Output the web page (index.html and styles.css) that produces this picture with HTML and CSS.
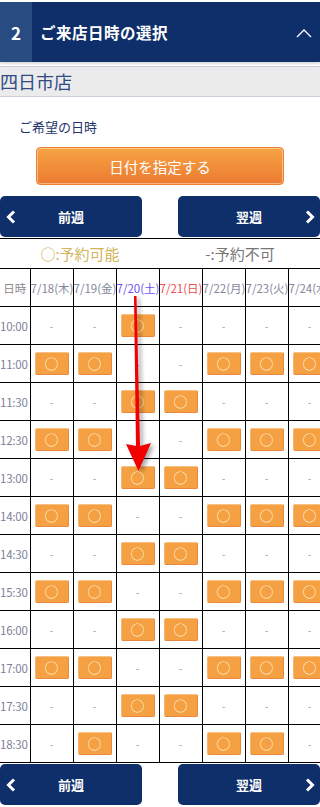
FILE: index.html
```html
<!DOCTYPE html>
<html lang="ja">
<head>
    <meta charset="UTF-8">
    <meta name="viewport" content="width=device-width, initial-scale=1.0">
    <title>ご来店日時の選択</title>
    <link rel="stylesheet" href="styles.css">
</head>
<body>
    <div class="page">
        <!-- Step header -->
        <div class="step-head">
            <div class="step-num">2</div>
            <div class="step-title">ご来店日時の選択</div>
            <svg class="step-toggle" width="16" height="9" viewBox="0 0 16 9">
                <polyline points="1,8 8,1 15,8" fill="none" stroke="#fff" stroke-width="1.3"/>
            </svg>
        </div>

        <div class="store-bar">四日市店</div>

        <div class="wish-label">ご希望の日時</div>
        <button class="date-btn">日付を指定する</button>

        <div class="week-nav">
            <button class="week-btn prev">
                <svg width="10" height="14" viewBox="0 0 10 14"><polyline points="8,1.5 2.5,7 8,12.5" fill="none" stroke="#fff" stroke-width="3"/></svg>
                <span>前週</span>
            </button>
            <button class="week-btn next">
                <span>翌週</span>
                <svg width="10" height="14" viewBox="0 0 10 14"><polyline points="2,1.5 7.5,7 2,12.5" fill="none" stroke="#fff" stroke-width="3"/></svg>
            </button>
        </div>

        <div class="legend">
            <span class="ok">○:予約可能</span>
            <span class="ng">-:予約不可</span>
        </div>

        <div class="sched-wrap">
            <table class="sched" id="sched">
                <colgroup>
                    <col class="c-time">
                    <col class="c-day"><col class="c-day"><col class="c-day"><col class="c-day">
                    <col class="c-day"><col class="c-day"><col class="c-day">
                </colgroup>
                <thead>
                    <tr>
                        <th class="time">日時</th>
                        <th>7/18(木)</th>
                        <th>7/19(金)</th>
                        <th class="sat">7/20(土)</th>
                        <th class="sun">7/21(日)</th>
                        <th>7/22(月)</th>
                        <th>7/23(火)</th>
                        <th>7/24(水)</th>
                    </tr>
                </thead>
                <tbody></tbody>
            </table>
        </div>

        <div class="week-nav bottom">
            <button class="week-btn prev">
                <svg width="10" height="14" viewBox="0 0 10 14"><polyline points="8,1.5 2.5,7 8,12.5" fill="none" stroke="#fff" stroke-width="3"/></svg>
                <span>前週</span>
            </button>
            <button class="week-btn next">
                <span>翌週</span>
                <svg width="10" height="14" viewBox="0 0 10 14"><polyline points="2,1.5 7.5,7 2,12.5" fill="none" stroke="#fff" stroke-width="3"/></svg>
            </button>
        </div>

        <!-- red guide arrow drawn over the table -->
        <svg class="guide-arrow" width="320" height="807" viewBox="0 0 320 807">
            <defs>
                <filter id="sh" x="-50%" y="-10%" width="200%" height="120%">
                    <feGaussianBlur stdDeviation="2"/>
                </filter>
            </defs>
            <polygon points="134,296 136.5,296 140,446 151,443 138.5,471 126,444 136,446" fill="#000" opacity="0.35" filter="url(#sh)" transform="translate(3,2)"/>
            <polygon points="134,296 136.5,296 140,446 151,443 138.5,471 126,444 136,446" fill="#f20000"/>
        </svg>
    </div>

    <script>
        // o = 予約可能, - = 予約不可
        var slots = [
            ['10:00', '--o----'],
            ['11:00', 'oo--ooo'],
            ['11:30', '--oo---'],
            ['12:30', 'oo--ooo'],
            ['13:00', '--oo---'],
            ['14:00', 'oo--ooo'],
            ['14:30', '--oo---'],
            ['15:30', 'oo--ooo'],
            ['16:00', '--oo---'],
            ['17:00', 'oo--ooo'],
            ['17:30', '--oo---'],
            ['18:30', '-o--oo-']
        ];

        var body = document.querySelector('#sched tbody');
        slots.forEach(function (row) {
            var tr = document.createElement('tr');
            var html = '<td class="time">' + row[0] + '</td>';
            for (var i = 0; i < row[1].length; i++) {
                if (row[1][i] === 'o') {
                    html += '<td><button class="slot">○</button></td>';
                } else {
                    html += '<td class="none">-</td>';
                }
            }
            tr.innerHTML = html;
            body.appendChild(tr);
        });
    </script>
</body>
</html>
```

FILE: styles.css
```css
body {
    margin: 0;
    font-family: "Noto Sans CJK JP", "Noto Sans", sans-serif;
    background-color: #fff;
    color: #333;
}
.page {
    position: relative;
    width: 320px;
    height: 807px;
    overflow: hidden;
    padding-top: 2px;
    box-sizing: border-box;
}
.step-head {
    display: flex;
    align-items: center;
    height: 60px;
    background-color: #0f2f6b;
    color: #fff;
    box-shadow: 0 2px 2px rgba(0, 0, 0, 0.15);
}
.step-num {
    width: 32px;
    height: 100%;
    display: flex;
    align-items: center;
    justify-content: center;
    background-color: #284b82;
    font-size: 17px;
    font-weight: bold;
}
.step-title {
    flex: 1;
    padding-left: 8px;
    font-size: 15.5px;
    font-weight: bold;
    letter-spacing: 0.5px;
}
.step-toggle {
    margin-right: 8px;
    margin-top: 2px;
}
.store-bar {
    margin-top: 4px;
    height: 29px;
    line-height: 29px;
    background-color: #ebebeb;
    border-top: 1px solid #c9ced8;
    border-bottom: 1px solid #c9ced8;
    font-size: 18px;
    color: #2f4c86;
}
.wish-label {
    margin-top: 20px;
    padding-left: 19px;
    height: 20px;
    line-height: 20px;
    font-size: 13px;
    color: #24346a;
}
.date-btn {
    display: block;
    width: 248px;
    height: 38px;
    margin: 10px auto 0;
    padding: 0;
    border: 1px solid #f07f33;
    border-radius: 4px;
    background: linear-gradient(#f6a444, #ec7a31);
    box-shadow: inset 0 0 0 1px rgba(255, 230, 190, 0.55);
    color: #fff;
    font-family: inherit;
    font-size: 14.5px;
}
.week-nav {
    display: flex;
    justify-content: space-between;
    margin-top: 11px;
}
.week-nav.bottom {
    margin-top: 1px;
}
.week-btn {
    position: relative;
    display: flex;
    align-items: center;
    justify-content: center;
    width: 142px;
    height: 41px;
    padding: 0;
    border: none;
    border-radius: 5px;
    background-color: #0f2f6b;
    color: #fff;
    font-family: inherit;
    font-size: 13px;
    font-weight: bold;
}
.week-btn svg {
    position: absolute;
    top: 14px;
}
.week-btn.prev svg {
    left: 6px;
}
.week-btn.next svg {
    right: 5px;
}
.legend {
    display: flex;
    margin-top: 1px;
    height: 29px;
    border-top: 1px solid #000;
    font-size: 15px;
    line-height: 29px;
}
.legend span {
    flex: 1;
    text-align: center;
}
.legend .ok {
    color: #d2b45a;
}
.legend .ng {
    color: #777;
}
.sched-wrap {
    width: 320px;
    overflow: hidden;
}
.sched {
    width: 331px;
    table-layout: fixed;
    border-collapse: collapse;
    font-size: 11.5px;
}
.c-time {
    width: 30px;
}
.c-day {
    width: 43px;
}
.sched th, .sched td {
    height: 37px;
    padding: 0;
    border: 1px solid #000;
    text-align: center;
    white-space: nowrap;
    font-weight: normal;
    color: #85869a;
}
.sched tr > :first-child {
    border-left: none;
}
.sched th.time {
    color: #8a8a8a;
}
.sched td.time {
    color: #7d7f98;
    text-align: left;
    letter-spacing: -0.2px;
}
.sched th.sat {
    color: #6a55f0;
}
.sched th.sun {
    color: #f04d4d;
}
.sched td.none {
    color: #8a9ab8;
    font-size: 10px;
}
.slot {
    display: block;
    width: 34px;
    height: 23px;
    margin: 0 auto;
    padding: 0;
    border: 1px solid #ea8840;
    border-top-color: #f8c184;
    border-left-color: #f6b574;
    border-radius: 2px;
    background-color: #f5a042;
    color: #fff6d8;
    font-family: inherit;
    font-size: 14px;
    line-height: 21px;
}
.guide-arrow {
    position: absolute;
    left: 0;
    top: 0;
    pointer-events: none;
}
```
